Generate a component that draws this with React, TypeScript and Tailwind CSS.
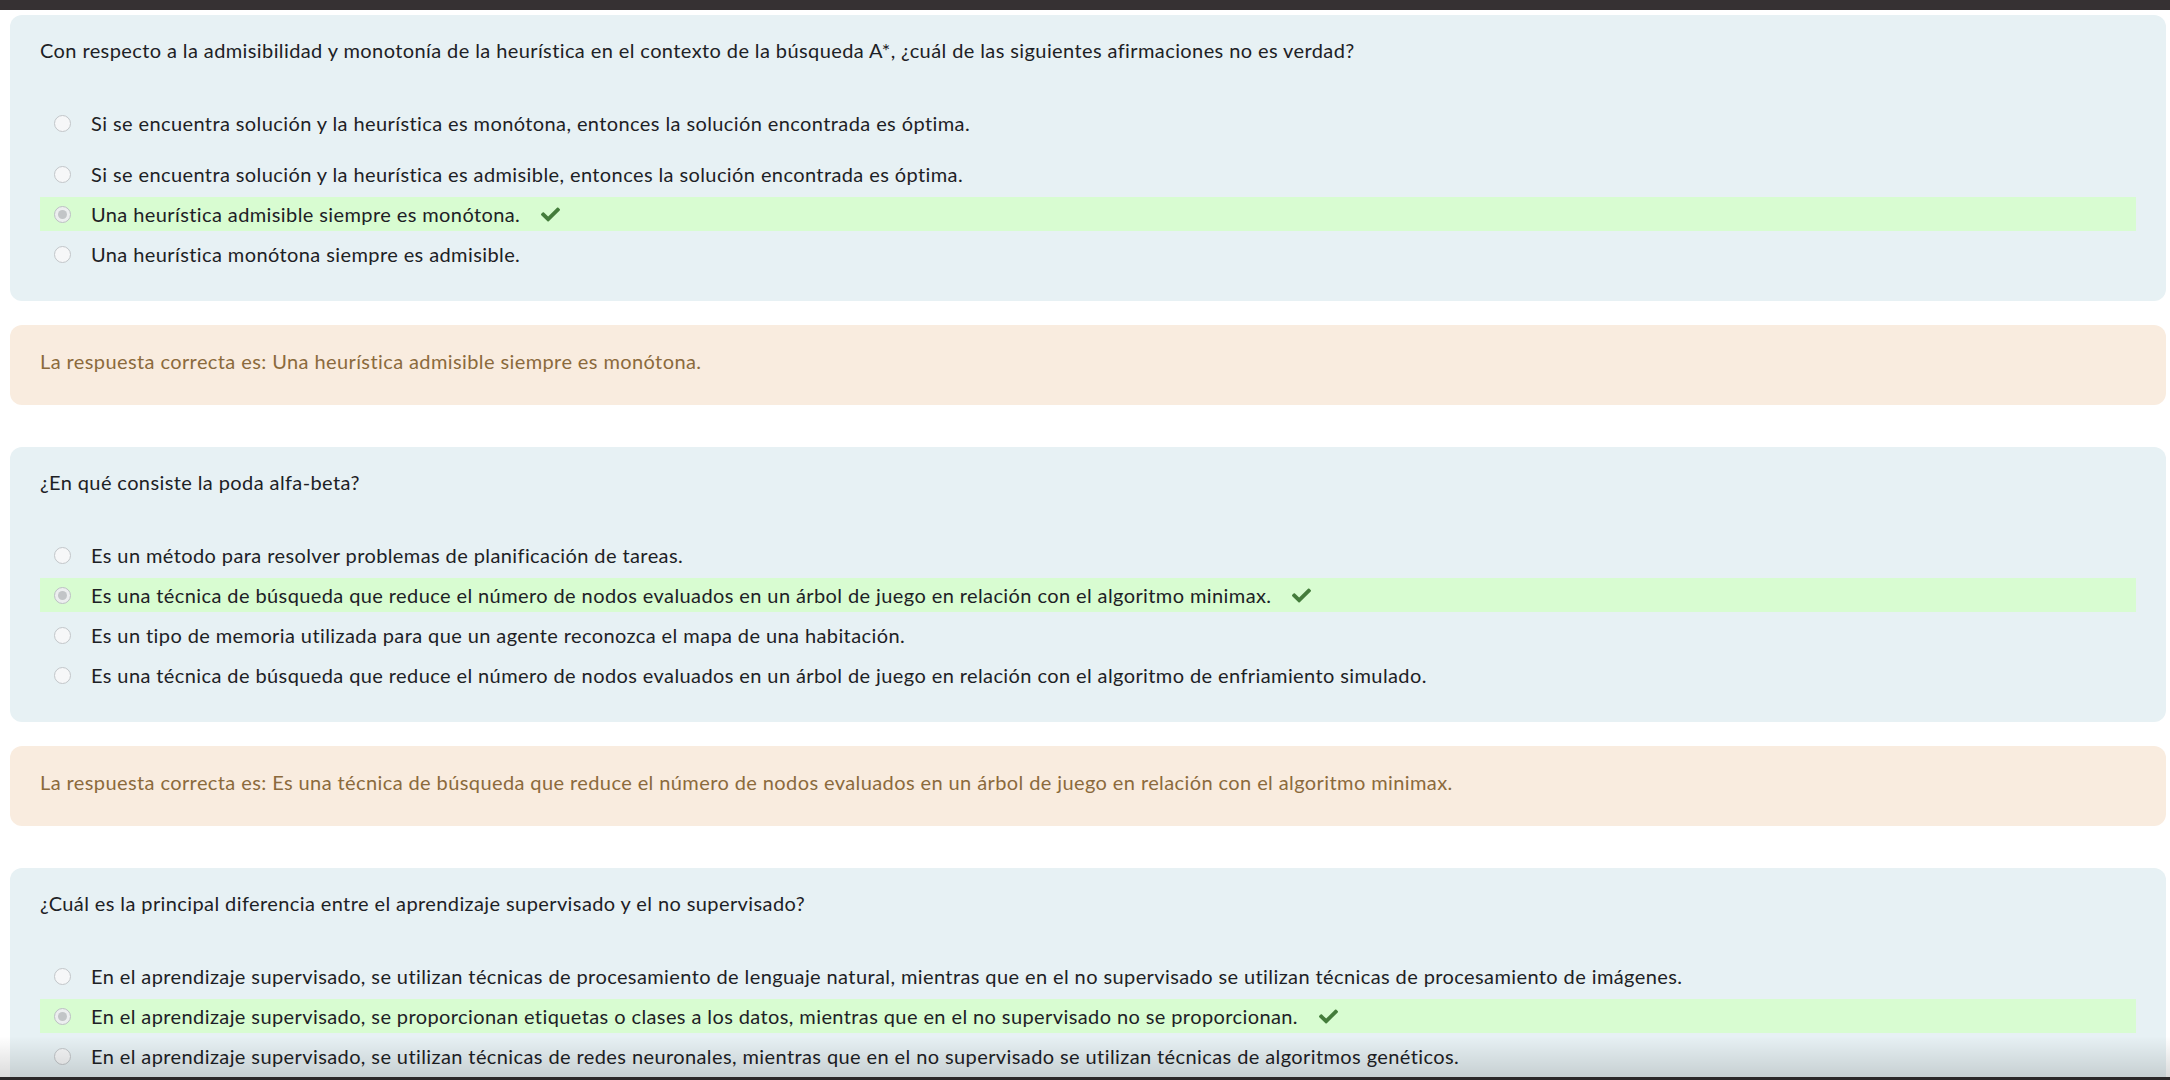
import { FaCheck } from "react-icons/fa";

type Question = {
  text: string;
  options: string[];
  selected: number;
  answer: string;
  firstGap?: boolean;
};

const questions: Question[] = [
  {
    text: "Con respecto a la admisibilidad y monotonía de la heurística en el contexto de la búsqueda A*, ¿cuál de las siguientes afirmaciones no es verdad?",
    options: [
      "Si se encuentra solución y la heurística es monótona, entonces la solución encontrada es óptima.",
      "Si se encuentra solución y la heurística es admisible, entonces la solución encontrada es óptima.",
      "Una heurística admisible siempre es monótona.",
      "Una heurística monótona siempre es admisible.",
    ],
    selected: 2,
    answer: "Una heurística admisible siempre es monótona.",
    firstGap: true,
  },
  {
    text: "¿En qué consiste la poda alfa-beta?",
    options: [
      "Es un método para resolver problemas de planificación de tareas.",
      "Es una técnica de búsqueda que reduce el número de nodos evaluados en un árbol de juego en relación con el algoritmo minimax.",
      "Es un tipo de memoria utilizada para que un agente reconozca el mapa de una habitación.",
      "Es una técnica de búsqueda que reduce el número de nodos evaluados en un árbol de juego en relación con el algoritmo de enfriamiento simulado.",
    ],
    selected: 1,
    answer:
      "Es una técnica de búsqueda que reduce el número de nodos evaluados en un árbol de juego en relación con el algoritmo minimax.",
  },
  {
    text: "¿Cuál es la principal diferencia entre el aprendizaje supervisado y el no supervisado?",
    options: [
      "En el aprendizaje supervisado, se utilizan técnicas de procesamiento de lenguaje natural, mientras que en el no supervisado se utilizan técnicas de procesamiento de imágenes.",
      "En el aprendizaje supervisado, se proporcionan etiquetas o clases a los datos, mientras que en el no supervisado no se proporcionan.",
      "En el aprendizaje supervisado, se utilizan técnicas de redes neuronales, mientras que en el no supervisado se utilizan técnicas de algoritmos genéticos.",
    ],
    selected: 1,
    answer:
      "En el aprendizaje supervisado, se proporcionan etiquetas o clases a los datos, mientras que en el no supervisado no se proporcionan.",
  },
];

function Radio({ checked }: { checked: boolean }) {
  return (
    <span
      className={
        "flex h-[17px] w-[17px] shrink-0 items-center justify-center rounded-full border " +
        (checked ? "border-[#bcc0c3] bg-[#eceeef]" : "border-[#c2c6c9] bg-[#f6f7f8]")
      }
    >
      {checked && <span className="h-[9px] w-[9px] rounded-full bg-[#c2c5c7]" />}
    </span>
  );
}

export default function App() {
  return (
    <div
      className="relative h-[1080px] overflow-hidden bg-white text-[20px] tracking-[0.4px] text-[#1d2125]"
      style={{ fontFamily: "Lato, 'Open Sans', sans-serif" }}
    >
      <div className="h-[10px] bg-[#363133]" />

      <div className="pl-[10px] pr-[4px] pt-[5px]">
        {questions.map((q, qi) => (
          <div key={qi}>
            <div className="rounded-[12px] bg-[#e7f1f4] px-[30px] pt-[20px] pb-[30px]">
              <p className="leading-[30px]">{q.text}</p>
              <div className="mt-[41px] flex flex-col gap-[6px]">
                {q.options.map((opt, oi) => (
                  <div
                    key={oi}
                    className={
                      "flex h-[34px] items-center gap-[20px] pl-[14px] " +
                      (oi === q.selected ? "bg-[#d8fcd1] " : "") +
                      (q.firstGap && oi === 0 ? "mb-[11px]" : "")
                    }
                  >
                    <Radio checked={oi === q.selected} />
                    <span className="whitespace-nowrap leading-[30px]">{opt}</span>
                    {oi === q.selected && (
                      <FaCheck className="ml-[1px] text-[19px] text-[#447c3b]" />
                    )}
                  </div>
                ))}
              </div>
            </div>

            <div className="mt-[24px] mb-[42px] rounded-[12px] bg-[#f9ecdf] px-[30px] pt-[21px] pb-[29px] text-[#8b6a3c]">
              <p className="leading-[30px]">La respuesta correcta es: {q.answer}</p>
            </div>
          </div>
        ))}
      </div>

      <div className="pointer-events-none absolute inset-x-0 bottom-0 h-[44px] bg-gradient-to-b from-transparent to-black/15" />
      <div className="absolute inset-x-0 bottom-0 h-[3px] bg-[#2b2829]" />
    </div>
  );
}
